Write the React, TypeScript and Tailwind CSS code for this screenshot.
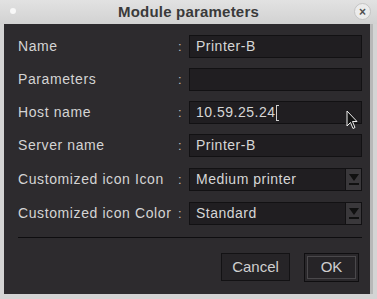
import React from 'react';

const FONT = { fontFamily: '"Liberation Sans", Arial, sans-serif' };

function Field({ value, caret }: { value: string; caret?: boolean }) {
  return (
    <div className="relative flex h-[23px] flex-1 items-center border border-[#121113] bg-[#201e21] pl-[6px] text-[14px] tracking-[0.5px] text-[#d6d6d6]">
      <span>{value}</span>
      {caret && <span className="ml-[1px] h-[16px] w-[3px] border-y border-l border-[#cfcfcf]" />}
    </div>
  );
}

function Combo({ value }: { value: string }) {
  return (
    <div className="flex h-[23px] flex-1 items-center border border-[#121113] bg-[#201e21] text-[14px] tracking-[0.5px] text-[#d6d6d6]">
      <span className="flex-1 pl-[6px]">{value}</span>
      <div className="flex h-full w-[16px] flex-col items-center justify-center gap-[2px] border-l border-[#121113] bg-[#3a383b]">
        <svg width="10" height="7" viewBox="0 0 10 7">
          <path d="M0 0 H10 L5 7 Z" fill="#101010" />
        </svg>
        <div className="h-[2px] w-[10px] bg-[#101010]" />
      </div>
    </div>
  );
}

const ROWS: { label: string; kind: 'field' | 'combo'; value: string; caret?: boolean }[] = [
  { label: 'Name', kind: 'field', value: 'Printer-B' },
  { label: 'Parameters', kind: 'field', value: '' },
  { label: 'Host name', kind: 'field', value: '10.59.25.24', caret: true },
  { label: 'Server name', kind: 'field', value: 'Printer-B' },
  { label: 'Customized icon Icon', kind: 'combo', value: 'Medium printer' },
  { label: 'Customized icon Color', kind: 'combo', value: 'Standard' },
];

export default function App() {
  return (
    <div className="relative flex h-[299px] w-[377px] flex-col overflow-hidden bg-[#d4d4d4]" style={FONT}>
      {/* Title bar */}
      <div className="relative flex h-[24px] items-center justify-center bg-gradient-to-b from-[#e2e2e2] to-[#d2d2d2]">
        <span className="absolute left-[10px] top-[8px] h-[6px] w-[6px] rounded-full bg-[#f8f8f8]" />
        <span className="text-[15px] font-bold tracking-[0.2px] text-[#3a3a3a]">Module parameters</span>
        <span className="absolute right-[6px] top-[3px] flex h-[17px] w-[17px] items-center justify-center rounded-full border border-[#c4c4c4] bg-[#ececec] text-[12px] font-bold leading-none text-[#505050]">
          ×
        </span>
      </div>

      {/* Body */}
      <div className="mx-[4px] mb-[5px] flex flex-1 flex-col border-r-[3px] border-[#b8b8b8] bg-[#2d2b2e] pl-[14px] pr-[8px] pt-[11px]">
        <div className="flex flex-col gap-[10px]">
          {ROWS.map((r) => (
            <div key={r.label} className={`flex items-center ${r.kind === 'combo' ? 'mt-[1px]' : ''}`}>
              <span className="w-[160px] text-[14px] tracking-[0.6px] text-[#d4d4d4]">{r.label}</span>
              <span className="w-[11px] text-[13px] text-[#bdbdbd]">:</span>
              {r.kind === 'field' ? <Field value={r.value} caret={r.caret} /> : <Combo value={r.value} />}
            </div>
          ))}
        </div>

        <div className="mt-[12px] h-[1px] bg-[#0e0d0f]" />

        <div className="mt-[15px] flex justify-end gap-[14px] pr-[3px]">
          <div className="flex h-[28px] w-[69px] items-center justify-center border border-[#131214] bg-[#262427] text-[15px] text-[#cfcfcf]">
            Cancel
          </div>
          <div className="flex h-[29px] w-[55px] items-center justify-center border border-[#0f0e10] bg-[#2a282b] p-[2px]">
            <div className="flex h-full w-full items-center justify-center border border-[#4a484b] bg-[#262427] text-[15px] text-[#cfcfcf]">
              OK
            </div>
          </div>
        </div>
      </div>

      {/* Mouse pointer */}
      <svg className="absolute left-[346px] top-[110px]" width="12" height="20" viewBox="0 0 12 20">
        <path d="M1 1 V16 L4.5 12.5 L7 18.5 L9 17.5 L6.5 11.5 H11 Z" fill="#111" stroke="#eee" strokeWidth="1" />
      </svg>
    </div>
  );
}
